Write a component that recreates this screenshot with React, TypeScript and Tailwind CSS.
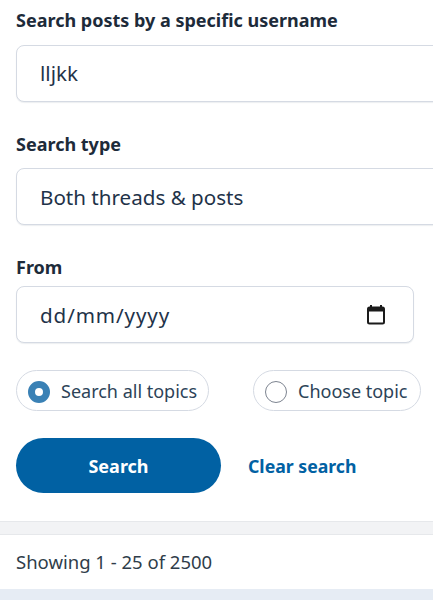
const fieldBox =
  "h-[57px] rounded-[8px] border border-[#d5dae3] bg-white shadow-[0_1px_1px_rgba(30,50,80,0.08)] flex items-center pl-[23px] text-[20.6px] text-[#1f3349]"

function Label({ children }: { children: React.ReactNode }) {
  return <p className="h-[24px] leading-[24px] text-[18px] font-bold text-[#1d2b3a]">{children}</p>
}

function CalendarIcon() {
  return (
    <svg width="20" height="22" viewBox="0 0 20 22" fill="none">
      <path d="M5 1v3M15 1v3" stroke="#1b1b1b" strokeWidth="2" />
      <rect x="2" y="3.5" width="16" height="16" rx="1.5" stroke="#1b1b1b" strokeWidth="2" />
      <rect x="2" y="3.5" width="16" height="4" fill="#1b1b1b" />
    </svg>
  )
}

function TopicPill({ label, checked, className }: { label: string; checked?: boolean; className: string }) {
  return (
    <div className={`h-[41px] rounded-full border border-[#d5dae3] bg-white flex items-center pl-[11px] gap-[11px] pt-[2px] text-[18px] text-[#2c4358] ${className}`}>
      {checked ? (
        <span className="w-[22px] h-[22px] rounded-full border-[7px] border-[#3a81b5] bg-white" />
      ) : (
        <span className="w-[22px] h-[22px] rounded-full border-[1.5px] border-[#7d8490] bg-white" />
      )}
      <span>{label}</span>
    </div>
  )
}

export default function App() {
  return (
    <div className="w-[433px] h-[600px] overflow-hidden bg-white font-['Noto_Sans',sans-serif]">
      <div className="pl-[16px] pt-[8px]">
        <Label>Search posts by a specific username</Label>
        <div className={`${fieldBox} mt-[13px] w-[440px]`}>lljkk</div>

        <div className="mt-[30px]">
          <Label>Search type</Label>
        </div>
        <div className={`${fieldBox} mt-[12px] w-[440px] pt-[2px]`}>Both threads &amp; posts</div>

        <div className="mt-[30px]">
          <Label>From</Label>
        </div>
        <div className={`${fieldBox} mt-[7px] w-[398px] justify-between pr-[27px]`}>
          <span className="tracking-[0.9px] pt-[2px]">dd/mm/yyyy</span>
          <CalendarIcon />
        </div>

        <div className="flex mt-[27px] gap-[44px]">
          <TopicPill label="Search all topics" checked className="w-[193px]" />
          <TopicPill label="Choose topic" className="w-[168px]" />
        </div>

        <div className="flex items-center mt-[27px]">
          <button type="button" className="w-[205px] h-[55px] pt-[2px] rounded-full bg-[#0161a3] text-white text-[18px] font-bold">
            Search
          </button>
          <a href="#" className="ml-[27px] pt-[2px] text-[17.7px] font-bold text-[#0161a3]">
            Clear search
          </a>
        </div>
      </div>

      <div className="mt-[28px] h-[14px] bg-[#f2f3f5] border-y border-[#e6e8eb]" />
      <div className="h-[54px] flex items-center pl-[16px] text-[18.5px] text-[#2f3d4a]">Showing 1 - 25 of 2500</div>
      <div className="h-[20px] bg-[#e6ecf4]" />
    </div>
  )
}
